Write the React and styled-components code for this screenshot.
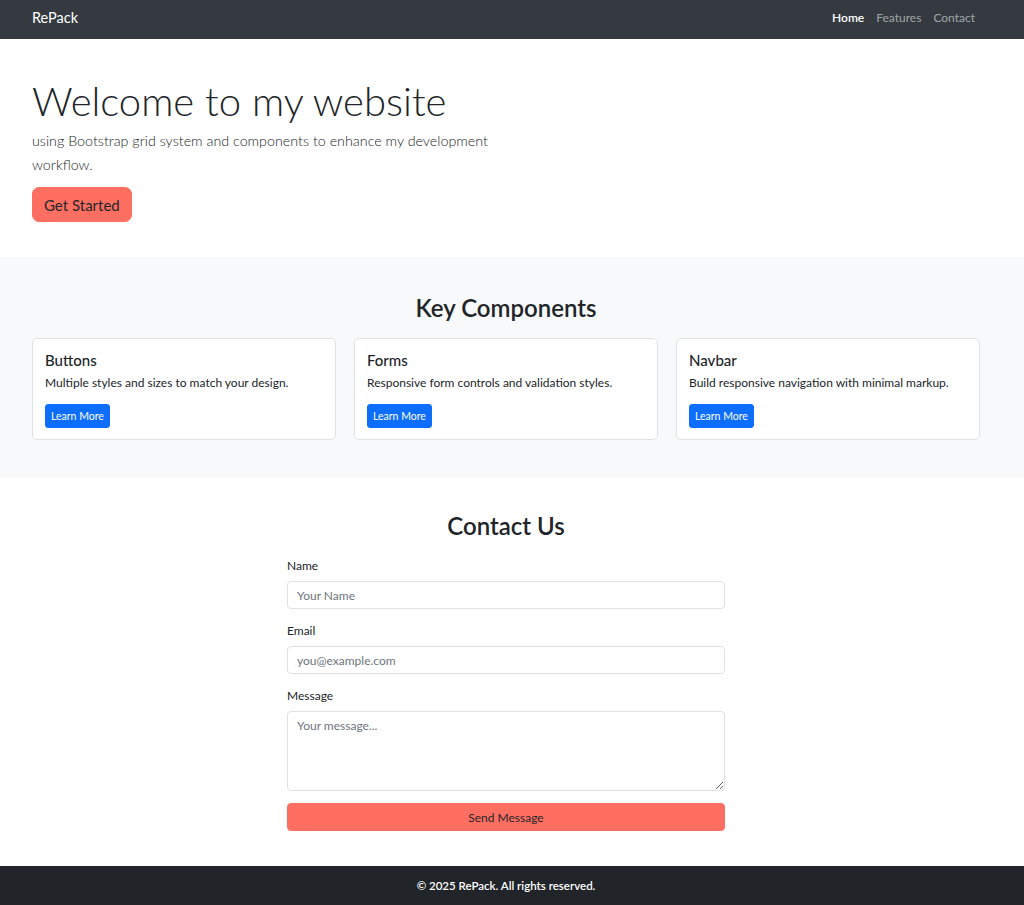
import React from "react";
import styled, { createGlobalStyle } from "styled-components";

const Global = createGlobalStyle`
  * { box-sizing: border-box; }
  body {
    margin: 0;
    font-family: "Segoe UI", Lato, "Noto Sans", sans-serif;
    color: #212529;
    background: #fff;
  }
`;

const Nav = styled.nav`
  height: 39px;
  background: #343a40;
  display: flex;
  align-items: center;
  justify-content: space-between;
  padding: 0 49px 4px 32px;
`;

const Brand = styled.a`
  color: #fff;
  font-size: 14.5px;
  text-decoration: none;
`;

const NavLinks = styled.div`
  display: flex;
  gap: 12px;
`;

const NavLink = styled.a`
  font-size: 12px;
  text-decoration: none;
  color: ${(p) => (p.$active ? "#fff" : "rgba(255,255,255,0.55)")};
  font-weight: ${(p) => (p.$active ? 600 : 400)};
`;

const Inner = styled.div`
  width: 948px;
  margin-left: 32px;
`;

const Hero = styled.section`
  padding: 34px 0 35px;
`;

const HeroCol = styled.div`
  width: 474px;
`;

const Display = styled.h1`
  margin: 0;
  font-size: 40px;
  font-weight: 300;
  line-height: 56px;
  white-space: nowrap;
  color: #212529;
`;

const Lead = styled.p`
  margin: 0 0 10px;
  font-size: 14.3px;
  font-weight: 300;
  line-height: 24px;
  color: #212529;
`;

const CoralButton = styled.button`
  display: block;
  background: #ff6f61;
  border: 1px solid #ff6f61;
  color: #212529;
  font-family: inherit;
  border-radius: ${(p) => (p.$block ? "4px" : "7px")};
  font-size: ${(p) => (p.$block ? "12px" : "15px")};
  height: ${(p) => (p.$block ? "28px" : "35px")};
  width: ${(p) => (p.$block ? "100%" : "auto")};
  padding: ${(p) => (p.$block ? "0" : "0 11px")};
`;

const Band = styled.section`
  background: ${(p) => p.$bg || "#fff"};
  padding: ${(p) => p.$pad};
`;

const SectionTitle = styled.h2`
  margin: 0 0 ${(p) => p.$mb || "16px"};
  text-align: center;
  font-size: 24px;
  font-weight: 600;
  line-height: 30px;
`;

const Cards = styled.div`
  display: grid;
  grid-template-columns: repeat(3, 304px);
  gap: 18px;
`;

const Card = styled.div`
  background: #fff;
  border: 1px solid #dee2e6;
  border-radius: 5px;
  padding: 12px;
  height: 102px;
`;

const CardTitle = styled.h5`
  margin: 0 0 5px;
  font-size: 15px;
  font-weight: 500;
  line-height: 18px;
`;

const CardText = styled.p`
  margin: 0 0 12px;
  font-size: 12px;
  line-height: 18px;
`;

const SmallBtn = styled.button`
  background: #0d6efd;
  border: 1px solid #0d6efd;
  color: #fff;
  font-family: inherit;
  font-size: 10.5px;
  height: 24px;
  padding: 0 5px;
  border-radius: 3px;
`;

const Form = styled.form`
  width: 438px;
  margin: 0 auto;
  display: flex;
  flex-direction: column;
`;

const Field = styled.div`
  margin-bottom: 14px;
  &:last-of-type { margin-bottom: 12px; }
`;

const Label = styled.label`
  display: block;
  font-size: 12px;
  line-height: 16px;
  margin-bottom: 7px;
`;

const Input = styled.input`
  display: block;
  width: 100%;
  height: 28px;
  border: 1px solid #dee2e6;
  border-radius: 4px;
  padding: 0 9px;
  font-family: inherit;
  font-size: 12px;
  color: #212529;
  &::placeholder { color: #6c757d; }
`;

const TextArea = styled.textarea`
  display: block;
  width: 100%;
  height: 80px;
  border: 1px solid #dee2e6;
  border-radius: 4px;
  padding: 6px 9px;
  font-family: inherit;
  font-size: 12px;
  resize: vertical;
  &::placeholder { color: #6c757d; }
`;

const Footer = styled.footer`
  height: 39px;
  background: #212529;
  color: #fff;
  display: flex;
  align-items: center;
  justify-content: center;
  padding-right: 12px;
  font-size: 11.5px;
  font-weight: 600;
`;

const features = [
  { t: "Buttons", d: "Multiple styles and sizes to match your design." },
  { t: "Forms", d: "Responsive form controls and validation styles." },
  { t: "Navbar", d: "Build responsive navigation with minimal markup." },
];

export default function App() {
  return (
    <>
      <Global />
      <Nav>
        <Brand href="#">RePack</Brand>
        <NavLinks>
          <NavLink $active href="#">Home</NavLink>
          <NavLink href="#">Features</NavLink>
          <NavLink href="#">Contact</NavLink>
        </NavLinks>
      </Nav>
      <Hero>
        <Inner>
          <HeroCol>
            <Display>Welcome to my website</Display>
            <Lead>using Bootstrap grid system and components to enhance my development workflow.</Lead>
            <CoralButton>Get Started</CoralButton>
          </HeroCol>
        </Inner>
      </Hero>
      <Band $bg="#f8f9fa" $pad="36px 0 37px">
        <Inner>
          <SectionTitle $mb="15px">Key Components</SectionTitle>
          <Cards>
            {features.map((f) => (
              <Card key={f.t}>
                <CardTitle>{f.t}</CardTitle>
                <CardText>{f.d}</CardText>
                <SmallBtn>Learn More</SmallBtn>
              </Card>
            ))}
          </Cards>
        </Inner>
      </Band>
      <Band $pad="34px 0 35px">
        <Inner>
          <SectionTitle $mb="17px">Contact Us</SectionTitle>
          <Form onSubmit={(e) => e.preventDefault()}>
            <Field>
              <Label>Name</Label>
              <Input placeholder="Your Name" />
            </Field>
            <Field>
              <Label>Email</Label>
              <Input placeholder="you@example.com" />
            </Field>
            <Field>
              <Label>Message</Label>
              <TextArea placeholder="Your message..." />
            </Field>
            <CoralButton $block type="submit">Send Message</CoralButton>
          </Form>
        </Inner>
      </Band>
      <Footer>© 2025 RePack. All rights reserved.</Footer>
    </>
  );
}
